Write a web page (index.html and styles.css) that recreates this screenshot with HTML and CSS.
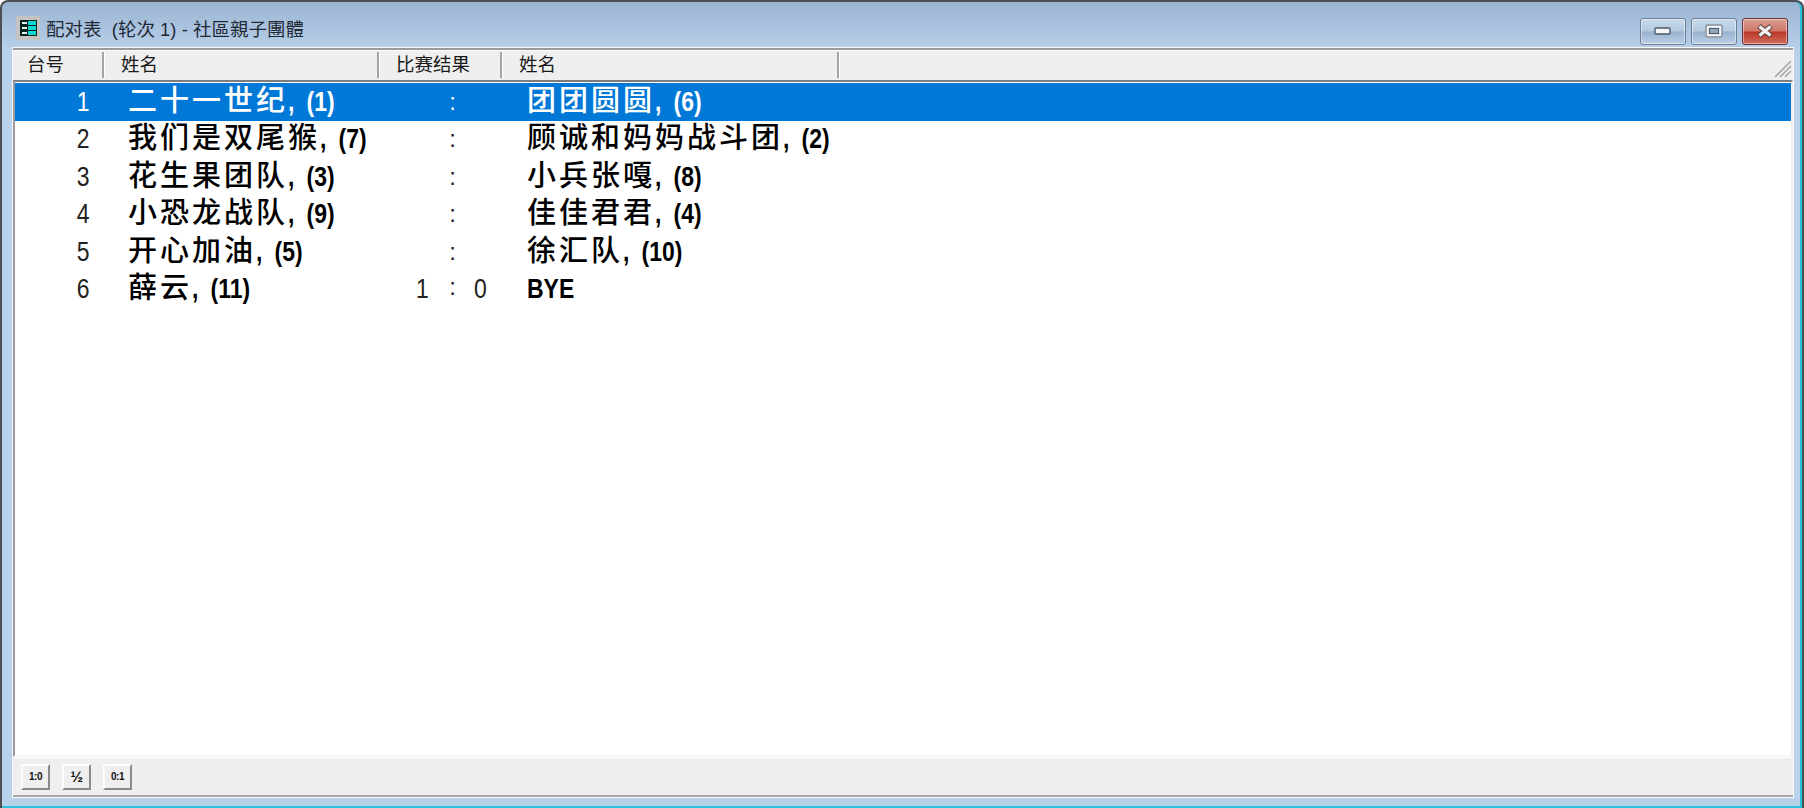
FILE: index.html
```html
<!DOCTYPE html>
<html lang="zh-CN">
<head>
    <meta charset="UTF-8">
    <title>配对表</title>
    <link rel="stylesheet" href="styles.css">
</head>
<body>
    <div class="window">
        <!-- 标题栏 -->
        <div class="titlebar">
            <svg class="app-icon" width="24" height="24" viewBox="0 0 24 24">
                <rect width="24" height="24" fill="#c4c4c4"/>
                <rect x="4" y="4" width="17" height="16" fill="#05241f"/>
                <rect x="6" y="6" width="5" height="2" fill="#dff2ee"/>
                <rect x="6" y="11" width="5" height="2" fill="#dff2ee"/>
                <rect x="6" y="16" width="5" height="2" fill="#dff2ee"/>
                <rect x="12" y="5" width="8" height="4" fill="#12d8d0"/>
                <rect x="12" y="10" width="8" height="4" fill="#12d8d0"/>
                <rect x="12" y="15" width="8" height="4" fill="#12d8d0"/>
            </svg>
            <span class="window-title">配对表&nbsp; (轮次 1) - 社區親子團體</span>
            <div class="controls">
                <div class="ctl"><svg width="18" height="10" viewBox="0 0 18 10"><rect x="1" y="2" width="15" height="6" rx="1" fill="#f4f6f8" stroke="#4d5a6c" stroke-width="1.4"/></svg></div>
                <div class="ctl"><svg width="18" height="14" viewBox="0 0 18 14"><rect x="2" y="2" width="14" height="10" rx="1" fill="none" stroke="#f2f4f6" stroke-width="3.4"/><rect x="1" y="1" width="16" height="12" rx="1" fill="none" stroke="#4d5a6c" stroke-width="1"/><rect x="4.5" y="4.5" width="9" height="5" fill="#8fa6bf" stroke="#4d5a6c" stroke-width="1"/></svg></div>
                <div class="ctl ctl-close"><svg width="20" height="14" viewBox="0 0 20 14"><path d="M4 2 L16 12 M16 2 L4 12" stroke="#59413d" stroke-width="5.2"/><path d="M4.5 2.5 L15.5 11.5 M15.5 2.5 L4.5 11.5" stroke="#f3f1f0" stroke-width="3.2"/></svg></div>
            </div>
        </div>

        <div class="client">
            <!-- 表头 -->
            <div class="header">
                <div class="head-cell col-no">台号</div>
                <div class="head-cell col-name">姓名</div>
                <div class="head-cell col-res">比赛结果</div>
                <div class="head-cell col-opp">姓名</div>
                <svg class="grip" width="18" height="18" viewBox="0 0 18 18">
                    <path d="M1 17 L17 1 M6 17 L17 6 M11 17 L17 11" stroke="#a8a8a8" stroke-width="1.6"/>
                </svg>
            </div>

            <!-- 配对列表 -->
            <div class="list">
                <div class="row selected">
                    <span class="c-no"><span class="lat">1</span></span>
                    <span class="c-name"><span class="zh">二十一世纪</span><span class="lat">, (1)</span></span>
                    <span class="c-score"><i></i><b>:</b><i></i></span>
                    <span class="c-opp"><span class="zh">团团圆圆</span><span class="lat">, (6)</span></span>
                </div>
                <div class="row">
                    <span class="c-no"><span class="lat">2</span></span>
                    <span class="c-name"><span class="zh">我们是双尾猴</span><span class="lat">, (7)</span></span>
                    <span class="c-score"><i></i><b>:</b><i></i></span>
                    <span class="c-opp"><span class="zh">顾诚和妈妈战斗团</span><span class="lat">, (2)</span></span>
                </div>
                <div class="row">
                    <span class="c-no"><span class="lat">3</span></span>
                    <span class="c-name"><span class="zh">花生果团队</span><span class="lat">, (3)</span></span>
                    <span class="c-score"><i></i><b>:</b><i></i></span>
                    <span class="c-opp"><span class="zh">小兵张嘎</span><span class="lat">, (8)</span></span>
                </div>
                <div class="row">
                    <span class="c-no"><span class="lat">4</span></span>
                    <span class="c-name"><span class="zh">小恐龙战队</span><span class="lat">, (9)</span></span>
                    <span class="c-score"><i></i><b>:</b><i></i></span>
                    <span class="c-opp"><span class="zh">佳佳君君</span><span class="lat">, (4)</span></span>
                </div>
                <div class="row">
                    <span class="c-no"><span class="lat">5</span></span>
                    <span class="c-name"><span class="zh">开心加油</span><span class="lat">, (5)</span></span>
                    <span class="c-score"><i></i><b>:</b><i></i></span>
                    <span class="c-opp"><span class="zh">徐汇队</span><span class="lat">, (10)</span></span>
                </div>
                <div class="row">
                    <span class="c-no"><span class="lat">6</span></span>
                    <span class="c-name"><span class="zh">薛云</span><span class="lat">, (11)</span></span>
                    <span class="c-score"><i><span class="lat">1</span></i><b>:</b><i><span class="lat">0</span></i></span>
                    <span class="c-opp"><span class="lat">BYE</span></span>
                </div>
            </div>

            <!-- 底部工具栏 -->
            <div class="toolbar">
                <button class="tool-btn" type="button">1:0</button>
                <button class="tool-btn tool-half" type="button">½</button>
                <button class="tool-btn" type="button">0:1</button>
            </div>
        </div>
    </div>
</body>
</html>
```

FILE: styles.css
```css
/* 기본 스타일링 */
html, body {
    margin: 0;
    padding: 0;
    height: 100%;
    overflow: hidden;
}

body {
    font-family: "Liberation Sans", "Noto Sans CJK SC", sans-serif;
    background-color: #fff;
}

.window {
    box-sizing: border-box;
    width: 1804px;
    height: 808px;
    padding: 0 9px 0 11px;
    display: flex;
    flex-direction: column;
    border: 2px solid #4b4f52;
    border-bottom: 0;
    border-radius: 8px 8px 0 0;
    background: linear-gradient(to bottom, #9bb4d1 0, #b9d1ea 50px);
    box-shadow: inset 0 -2px 0 #2cc1dc, inset -2px 0 0 #2cc1dc;
}

/* 제목 표시줄 */
.titlebar {
    height: 46px;
    flex: none;
    display: flex;
    align-items: center;
    color: #1f2a36;
    font-size: 18.5px;
}

.app-icon {
    margin: 6px 6px 0 3px;
}

.window-title {
    margin-top: 6px;
}

.controls {
    margin-left: auto;
    margin-top: 12px;
    display: flex;
    gap: 5px;
    padding-right: 5px;
}

.ctl {
    box-sizing: border-box;
    width: 46px;
    height: 27px;
    display: flex;
    align-items: center;
    justify-content: center;
    border: 1px solid #6d7f97;
    border-radius: 3px;
    background: linear-gradient(to bottom, #c9d9eb 0, #b4c9e0 48%, #98b2cf 52%, #bdd0e4 100%);
    box-shadow: inset 0 0 0 1px rgba(255, 255, 255, 0.45);
}

.ctl-close {
    border-color: #6c2e38;
    background: linear-gradient(to bottom, #dc9e92 0, #d0776a 48%, #bd3526 52%, #cf6d5c 100%);
}

.client {
    flex: 1;
    min-height: 0;
    margin-bottom: 11px;
    display: flex;
    flex-direction: column;
    background-color: #efefef;
    border-top: 2px solid #9a9a9a;
    border-bottom: 2px solid #a8a8a8;
    outline: 1px solid #f8f8f8;
}

/* 헤더 */
.header {
    height: 29px;
    flex: none;
    display: flex;
    position: relative;
    font-size: 18.5px;
    color: #1a1a1a;
    border-top: 1px solid #fbfbfb;
}

.head-cell {
    box-sizing: border-box;
    line-height: 26px;
    padding-left: 14px;
    border-right: 2px solid #a5a5a5;
    box-shadow: 1px 0 0 #fff;
    height: 26px;
    margin-bottom: 2px;
    margin-top: 1px;
}

.col-no { width: 91px; }
.col-name { width: 275px; padding-left: 17px; }
.col-res { width: 123px; padding-left: 17px; }
.col-opp { width: 337px; padding-left: 17px; }

.grip {
    position: absolute;
    right: 1px;
    top: 9px;
}

/* 목록 */
.list {
    flex: 1;
    min-height: 0;
    background-color: #fff;
    border-top: 2px solid #7d7d7d;
    border-left: 2px solid #9a9a9a;
    border-right: 2px solid #efefef;
    border-bottom: 2px solid #f6f6f6;
    padding-top: 1px;
    color: #000;
}

.row {
    height: 37.5px;
    display: flex;
    align-items: center;
    font-size: 28px;
    white-space: nowrap;
    color: #000;
}

.row.selected {
    background-color: #0078d7;
    color: #fff;
}

/* 좁은 글자 */
.lat {
    display: inline-block;
    transform: scaleX(0.82);
    transform-origin: left center;
    word-spacing: 7px;
    white-space: pre;
}

.c-no {
    width: 75px;
    text-align: right;
    color: #222;
}

.c-no .lat {
    transform-origin: right center;
}

.selected .c-no {
    color: #fff;
}

.c-name {
    box-sizing: border-box;
    width: 293px;
    padding-left: 38px;
    font-weight: bold;
}

.c-opp {
    padding-left: 5px;
    font-weight: bold;
}

.zh {
    font-size: 29px;
    font-weight: 500;
    line-height: 30px;
    letter-spacing: 3px;
}

.c-score {
    width: 139px;
    display: flex;
    justify-content: center;
    color: #222;
    font-size: 24px;
}

.selected .c-score {
    color: #fff;
}

.c-score i, .c-score b {
    font-style: normal;
    font-weight: normal;
}

.c-score i {
    width: 28px;
    font-size: 28px;
    text-align: center;
}

.c-score b {
    width: 30px;
    text-align: center;
}

/* 하단 도구 모음 */
.toolbar {
    height: 37px;
    flex: none;
    display: flex;
    align-items: center;
    padding-left: 8px;
    gap: 12px;
    border-top: 1px solid #fff;
}

.tool-btn {
    box-sizing: border-box;
    width: 29px;
    height: 26px;
    padding: 0;
    font-family: "Liberation Sans", sans-serif;
    font-size: 10px;
    font-weight: bold;
    letter-spacing: -0.5px;
    color: #111;
    background-color: #efefef;
    border: 2px solid;
    border-color: #fdfdfd #8a8a8a #8a8a8a #fdfdfd;
}

.tool-half {
    font-size: 15px;
}
```
